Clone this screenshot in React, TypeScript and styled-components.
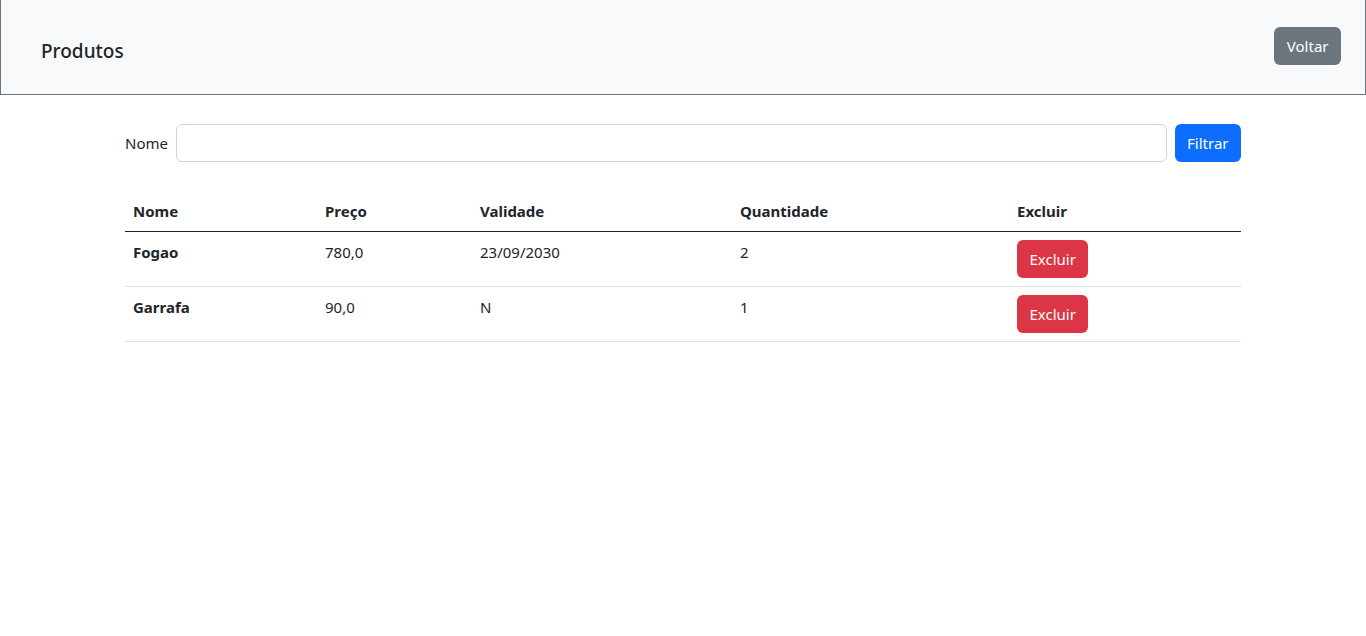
import React, { useState } from "react";
import styled, { createGlobalStyle } from "styled-components";

type TProduto = {
  nome: string;
  preco: string;
  validade: string;
  quantidade: number;
};

const GlobalStyle = createGlobalStyle`
  * {
    box-sizing: border-box;
  }
  body {
    margin: 0;
    background: #fff;
    color: #212529;
    font-family: "Noto Sans", "Open Sans", sans-serif;
    font-size: 16px;
    line-height: 1.5;
  }
`;

const Header = styled.header`
  height: 95px;
  background: #f8f9fa;
  border: 1px solid #6c757d;
  border-top: none;
  display: flex;
  align-items: center;
  justify-content: space-between;
  padding: 0 24px 2px 40px;
  h1 {
    margin: 10px 0 0;
    font-size: 19px;
    font-weight: 500;
    line-height: 1.2;
  }
`;

const Button = styled.button<{ $variant: "secondary" | "primary" | "danger" }>`
  height: 38px;
  padding: 6px 11.5px;
  border: 1px solid transparent;
  border-radius: 6px;
  font-family: inherit;
  font-size: 15px;
  line-height: 24px;
  color: #fff;
  cursor: pointer;
  background: ${({ $variant }) =>
    $variant === "primary"
      ? "#0d6efd"
      : $variant === "danger"
      ? "#dc3545"
      : "#6c757d"};
`;

const Container = styled.main`
  width: 1116px;
  margin: 0 auto;
  padding-top: 29px;
`;

const FilterRow = styled.form`
  display: flex;
  align-items: center;
  gap: 8px;
  margin-bottom: 29px;
  label {
    font-size: 15px;
  }
  input {
    flex: 1;
    height: 38px;
    border: 1px solid #ced4da;
    border-radius: 6px;
    padding: 6px 12px;
    font-family: inherit;
    font-size: 16px;
    outline: none;
  }
`;

const Table = styled.table`
  width: 100%;
  border-collapse: collapse;
  font-size: 15px;
  th,
  td {
    padding: 8px;
    text-align: left;
    vertical-align: top;
    line-height: 24px;
  }
  th {
    font-weight: 700;
    border-bottom: 1px solid #212529;
  }
  th:nth-child(1) {
    width: 192px;
  }
  th:nth-child(2) {
    width: 155px;
  }
  th:nth-child(3) {
    width: 260px;
  }
  th:nth-child(4) {
    width: 277px;
  }
  td {
    border-bottom: 1px solid #dee2e6;
  }
  td:first-child {
    font-weight: 700;
  }
`;

const produtos: TProduto[] = [
  { nome: "Fogao", preco: "780,0", validade: "23/09/2030", quantidade: 2 },
  { nome: "Garrafa", preco: "90,0", validade: "N", quantidade: 1 },
];

export default function App() {
  const [filtro, setFiltro] = useState("");

  return (
    <>
      <GlobalStyle />
      <Header>
        <h1>Produtos</h1>
        <Button $variant="secondary">Voltar</Button>
      </Header>
      <Container>
        <FilterRow onSubmit={(e) => e.preventDefault()}>
          <label htmlFor="nome">Nome</label>
          <input
            id="nome"
            value={filtro}
            onChange={(e) => setFiltro(e.target.value)}
          />
          <Button $variant="primary" type="submit">
            Filtrar
          </Button>
        </FilterRow>
        <Table>
          <thead>
            <tr>
              <th>Nome</th>
              <th>Preço</th>
              <th>Validade</th>
              <th>Quantidade</th>
              <th>Excluir</th>
            </tr>
          </thead>
          <tbody>
            {produtos.map((p) => (
              <tr key={p.nome}>
                <td>{p.nome}</td>
                <td>{p.preco}</td>
                <td>{p.validade}</td>
                <td>{p.quantidade}</td>
                <td>
                  <Button $variant="danger">Excluir</Button>
                </td>
              </tr>
            ))}
          </tbody>
        </Table>
      </Container>
    </>
  );
}
